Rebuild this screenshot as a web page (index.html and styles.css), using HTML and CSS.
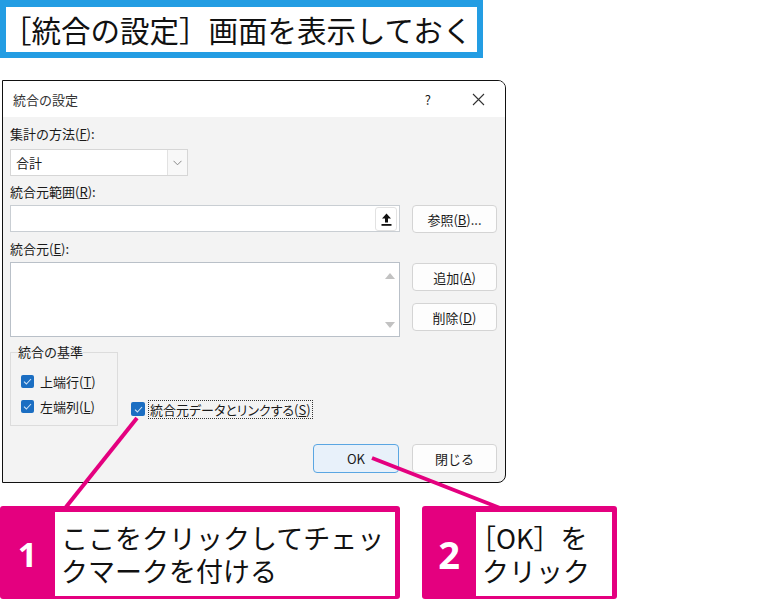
FILE: index.html
```html
<!DOCTYPE html>
<html lang="ja">
<head>
  <meta charset="UTF-8" />
  <title>統合の設定</title>
  <link rel="stylesheet" href="styles.css">
</head>
<body>
<div class="page">
  <div class="caption"><span class="caption-text">［統合の設定］画面を表示しておく</span></div>

  <div class="dialog">
    <div class="titlebar">
      <span class="title">統合の設定</span>
      <span class="help">?</span>
      <svg class="close" width="13" height="13" viewBox="0 0 13 13"><path d="M1 1L12 12M12 1L1 12" stroke="#333" stroke-width="1.1" fill="none"/></svg>
    </div>
    <div class="body">
      <div class="label label-first">集計の方法(<u>F</u>):</div>
      <div class="select">
        <span class="select-value">合計</span>
        <span class="select-arrow"><svg width="9" height="6" viewBox="0 0 9 6"><path d="M0.5 0.8L4.5 4.8L8.5 0.8" stroke="#888" stroke-width="1" fill="none"/></svg></span>
      </div>

      <div class="label">統合元範囲(<u>R</u>):</div>
      <div class="row">
        <div class="input">
          <span class="collapse-btn"><svg width="11" height="13" viewBox="0 0 11 13"><path d="M5.5 0.5L10 5.5H7V9.5H4V5.5H1Z" fill="#111"/><rect x="0.5" y="11" width="10" height="1.8" fill="#111"/></svg></span>
        </div>
        <div class="btn">参照(<u>B</u>)...</div>
      </div>

      <div class="label">統合元(<u>E</u>):</div>
      <div class="row">
        <div class="listbox">
          <div class="scroll">
            <svg width="10" height="6" viewBox="0 0 10 6"><path d="M5 0L10 6H0Z" fill="#c2c2c2"/></svg>
            <svg width="10" height="6" viewBox="0 0 10 6"><path d="M0 0H10L5 6Z" fill="#c2c2c2"/></svg>
          </div>
        </div>
        <div class="btn-col">
          <div class="btn">追加(<u>A</u>)</div>
          <div class="btn">削除(<u>D</u>)</div>
        </div>
      </div>

      <div class="group-row">
        <fieldset class="group">
          <legend>統合の基準</legend>
          <div class="check"><span class="box"><svg width="9" height="7" viewBox="0 0 9 7"><path d="M1 3.6L3.4 6L8 1" stroke="#cfe3f7" stroke-width="1.1" fill="none"/></svg></span><span>上端行(<u>T</u>)</span></div>
          <div class="check"><span class="box"><svg width="9" height="7" viewBox="0 0 9 7"><path d="M1 3.6L3.4 6L8 1" stroke="#cfe3f7" stroke-width="1.1" fill="none"/></svg></span><span>左端列(<u>L</u>)</span></div>
        </fieldset>
        <div class="check link-check"><span class="box"><svg width="9" height="7" viewBox="0 0 9 7"><path d="M1 3.6L3.4 6L8 1" stroke="#cfe3f7" stroke-width="1.1" fill="none"/></svg></span><span class="focus">統合元データとリンクする(<u>S</u>)</span></div>
      </div>

      <div class="actions">
        <div class="btn btn-ok">OK</div>
        <div class="btn">閉じる</div>
      </div>
    </div>
  </div>

  <div class="callouts">
    <div class="callout callout-1">
      <div class="num">1</div>
      <div class="note"><div>ここをクリックしてチェッ<br>クマークを付ける</div></div>
    </div>
    <div class="callout callout-2">
      <div class="num">2</div>
      <div class="note"><div><span class="pull">［OK］を</span><br>クリック</div></div>
    </div>
  </div>

  <svg class="leaders" width="783" height="600" viewBox="0 0 783 600">
    <line x1="137" y1="418" x2="66" y2="507" stroke="#e4007f" stroke-width="4"/>
    <line x1="372" y1="458" x2="500" y2="508" stroke="#e4007f" stroke-width="4"/>
  </svg>
</div>
</body>
</html>
```

FILE: styles.css
```css
body {
  margin: 0;
  background: #fff;
  font-family: "Noto Sans CJK JP", "Noto Sans", sans-serif;
  color: #1a1a1a;
}
.page {
  position: relative;
  width: 783px;
  height: 600px;
  overflow: hidden;
}
.caption {
  box-sizing: border-box;
  width: 483px;
  height: 58px;
  border: 6px solid #239de3;
  border-top-width: 7px;
  font-size: 29.5px;
  line-height: 44px;
  color: #111;
  white-space: nowrap;
}
.caption-text {
  margin-left: -4px;
}

/* dialog */
.dialog {
  box-sizing: border-box;
  width: 504px;
  height: 403px;
  margin: 22px 0 0 2px;
  border: 1px solid #111;
  border-radius: 0 8px 8px 0;
  background: #f3f3f3;
  overflow: hidden;
  font-size: 13px;
}
.titlebar {
  height: 36px;
  background: #fff;
  display: flex;
  align-items: center;
  padding: 0 20px 0 10px;
}
.title {
  color: #333;
}
.help {
  margin-left: auto;
  margin-right: 41px;
}
.body {
  padding: 0 8px 0 7px;
}
.label {
  line-height: 18px;
  height: 18px;
  margin-top: 7px;
}
.label-first {
  margin-top: 8px;
}
.select {
  margin-top: 6px;
  width: 178px;
  height: 27px;
  box-sizing: border-box;
  border: 1px solid #d6d6d6;
  background: #fff;
  display: flex;
  align-items: center;
}
.select-value {
  flex: 1;
  padding-left: 5px;
}
.select-arrow {
  width: 19px;
  height: 25px;
  border-left: 1px solid #e2e2e2;
  background: #f8f8f8;
  display: flex;
  align-items: center;
  justify-content: center;
}
.row {
  display: flex;
  gap: 12px;
  margin-top: 4px;
}
.input {
  width: 390px;
  height: 27px;
  box-sizing: border-box;
  border: 1px solid #c9ced3;
  background: #fff;
  display: flex;
  justify-content: flex-end;
  padding: 1px 2px 0 0;
}
.collapse-btn {
  width: 22px;
  height: 24px;
  box-sizing: border-box;
  border: 1px solid #e2e2e2;
  border-radius: 3px;
  background: #fff;
  display: flex;
  align-items: center;
  justify-content: center;
}
.btn {
  box-sizing: border-box;
  width: 85px;
  height: 28px;
  border: 1px solid #d4d4d4;
  border-radius: 4px;
  background: #fdfdfd;
  display: flex;
  align-items: center;
  justify-content: center;
}
.listbox {
  width: 390px;
  height: 75px;
  box-sizing: border-box;
  border: 1px solid #b9c0c8;
  background: #fff;
  display: flex;
  justify-content: flex-end;
}
.scroll {
  width: 18px;
  display: flex;
  flex-direction: column;
  justify-content: space-between;
  align-items: center;
  padding: 10px 0 8px;
}
.btn-col {
  display: flex;
  flex-direction: column;
  gap: 12px;
  padding-top: 1px;
}

/* group */
.group-row {
  display: flex;
  margin-top: 7px;
}
.group {
  width: 108px;
  height: 82px;
  box-sizing: border-box;
  margin: 0;
  border: 1px solid #dcdcdc;
  padding: 0 0 0 10px;
}
.group legend {
  padding: 0;
  margin-left: -3px;
  line-height: 16px;
}
.check {
  display: flex;
  align-items: center;
  height: 20px;
  gap: 6px;
}
.group .check:first-of-type {
  margin-top: 11px;
}
.group .check + .check {
  margin-top: 5px;
}
.box {
  width: 13px;
  height: 13px;
  border-radius: 2px;
  background: #1b6ec2;
  display: flex;
  align-items: center;
  justify-content: center;
}
.link-check {
  margin: 55px 0 0 13px;
  gap: 3px;
}
.link-check .box {
  width: 14px;
  height: 14px;
}
.focus {
  border: 1px dotted #333;
  padding: 0 1px;
  line-height: 17px;
  font-feature-settings: "palt";
}
.actions {
  display: flex;
  justify-content: flex-end;
  gap: 13px;
  margin-top: 18px;
}
.actions .btn {
  height: 29px;
}
.btn-ok {
  width: 86px;
  border-color: #5aa6e2;
  background: #e8f1fa;
}

/* callouts */
.callouts {
  display: flex;
  gap: 22px;
  margin-top: 23px;
}
.callout {
  box-sizing: border-box;
  height: 93px;
  background: #e4007f;
  border-radius: 3px;
  padding: 6px 5px 3px 0;
  display: flex;
}
.callout-1 {
  width: 400px;
}
.callout-2 {
  width: 195px;
}
.num {
  width: 55px;
  color: #fff;
  font-size: 34px;
  font-weight: 700;
  font-family: "Noto Sans", sans-serif;
  display: flex;
  align-items: center;
  justify-content: center;
}
.callout-2 .num {
  width: 54px;
  font-size: 38px;
}
.note {
  flex: 1;
  background: #fff;
  font-size: 27px;
  line-height: 33px;
  padding-left: 6px;
  display: flex;
  align-items: center;
  color: #111;
  white-space: nowrap;
}
.callout-2 .note {
  padding-left: 6px;
}
.pull {
  margin-left: -13px;
}
.leaders {
  position: absolute;
  left: 0;
  top: 0;
  pointer-events: none;
}
```
